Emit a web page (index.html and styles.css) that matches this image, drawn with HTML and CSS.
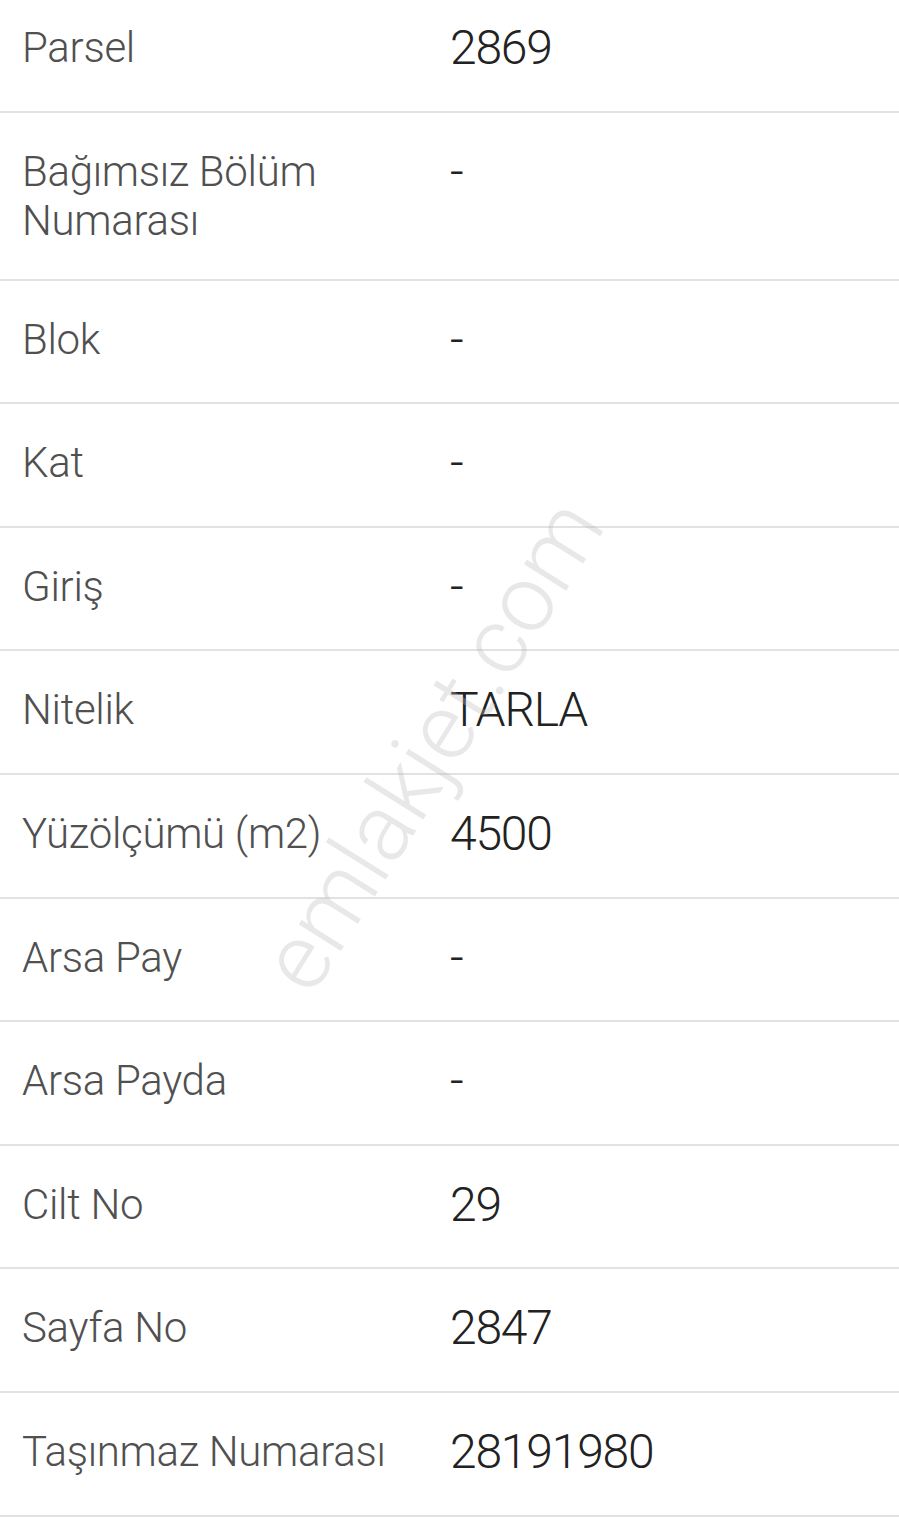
FILE: index.html
```html
<!DOCTYPE html>
<html lang="tr">
<head>
<meta charset="utf-8">
<title>Tapu Bilgileri</title>
<link rel="stylesheet" href="styles.css">
</head>
<body>
<div class="sheet">
  <dl class="list">
    <div class="row"><dt class="label">Parsel</dt><dd class="value">2869</dd></div>
    <div class="row"><dt class="label">Bağımsız Bölüm<br>Numarası</dt><dd class="value">-</dd></div>
    <div class="row"><dt class="label">Blok</dt><dd class="value">-</dd></div>
    <div class="row"><dt class="label">Kat</dt><dd class="value">-</dd></div>
    <div class="row"><dt class="label">Giriş</dt><dd class="value">-</dd></div>
    <div class="row"><dt class="label">Nitelik</dt><dd class="value">TARLA</dd></div>
    <div class="row"><dt class="label">Yüzölçümü (m2)</dt><dd class="value">4500</dd></div>
    <div class="row"><dt class="label">Arsa Pay</dt><dd class="value">-</dd></div>
    <div class="row"><dt class="label">Arsa Payda</dt><dd class="value">-</dd></div>
    <div class="row"><dt class="label">Cilt No</dt><dd class="value">29</dd></div>
    <div class="row"><dt class="label">Sayfa No</dt><dd class="value">2847</dd></div>
    <div class="row"><dt class="label">Taşınmaz Numarası</dt><dd class="value">28191980</dd></div>
  </dl>
  <div class="watermark">emlakjet.com</div>
</div>
</body>
</html>
```
FILE: styles.css
```css
html, body {
  margin: 0;
  padding: 0;
  background: #ffffff;
}

body {
  font-family: Roboto, "Noto Sans", "Liberation Sans", sans-serif;
  overflow: hidden;
}

.sheet {
  position: relative;
  width: 899px;
  height: 1517px;
  overflow: hidden;
}

.list {
  margin: -11px 0 0 0;
  padding: 0;
}

.row {
  box-sizing: border-box;
  display: grid;
  grid-template-columns: 428px 1fr;
  align-items: start;
  min-height: 123.6px;
  padding: 34px 0 34px 22px;
  border-bottom: 2px solid #e2e2e2;
}

.label {
  margin: 0;
  font-size: 42px;
  font-weight: 300;
  line-height: 49px;
  letter-spacing: -0.3px;
  color: #505050;
}

.value {
  margin: 0;
  font-size: 48px;
  font-weight: 300;
  line-height: 49px;
  letter-spacing: -1.2px;
  color: #222222;
}

.watermark {
  position: absolute;
  left: 432px;
  top: 745px;
  transform: translate(-50%, -50%) rotate(-58deg);
  font-size: 94px;
  font-weight: 300;
  white-space: nowrap;
  color: rgba(185, 185, 185, 0.33);
  pointer-events: none;
}
```
